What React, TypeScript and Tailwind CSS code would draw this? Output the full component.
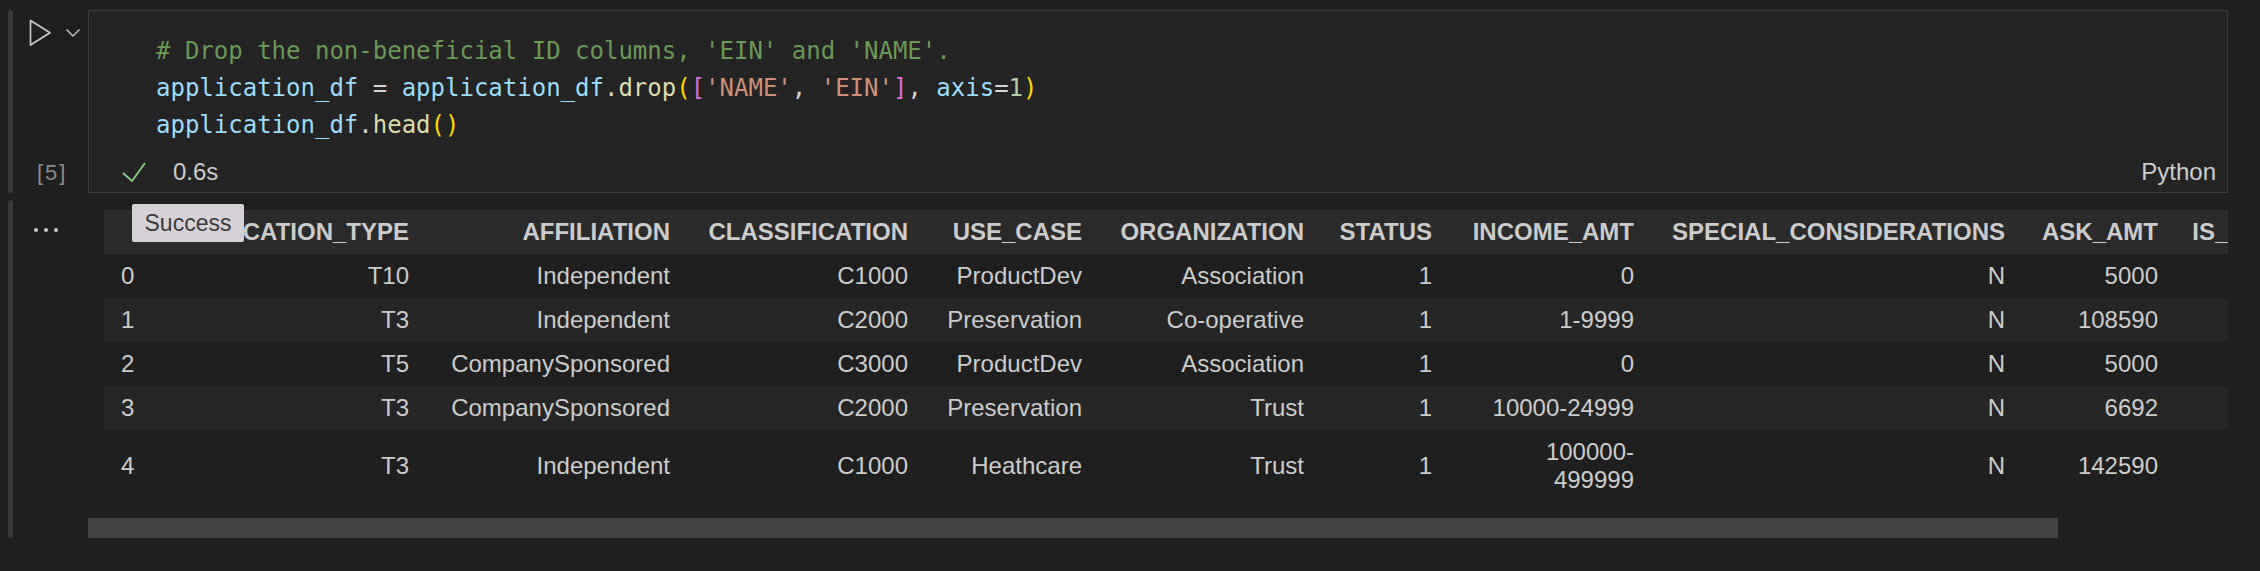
import React from "react";

const code = [
  [{ t: "# Drop the non-beneficial ID columns, 'EIN' and 'NAME'.", c: "text-[#6a9955]" }],
  [
    { t: "application_df", c: "text-[#9cdcfe]" },
    { t: " = ", c: "text-[#d4d4d4]" },
    { t: "application_df", c: "text-[#9cdcfe]" },
    { t: ".", c: "text-[#d4d4d4]" },
    { t: "drop", c: "text-[#dcdcaa]" },
    { t: "(", c: "text-[#ffd700]" },
    { t: "[", c: "text-[#da70d6]" },
    { t: "'NAME'", c: "text-[#ce9178]" },
    { t: ", ", c: "text-[#d4d4d4]" },
    { t: "'EIN'", c: "text-[#ce9178]" },
    { t: "]", c: "text-[#da70d6]" },
    { t: ", ", c: "text-[#d4d4d4]" },
    { t: "axis", c: "text-[#9cdcfe]" },
    { t: "=", c: "text-[#d4d4d4]" },
    { t: "1", c: "text-[#b5cea8]" },
    { t: ")", c: "text-[#ffd700]" },
  ],
  [
    { t: "application_df", c: "text-[#9cdcfe]" },
    { t: ".", c: "text-[#d4d4d4]" },
    { t: "head", c: "text-[#dcdcaa]" },
    { t: "()", c: "text-[#ffd700]" },
  ],
];

const columns = [
  { name: "", w: "w-[38px]" },
  { name: "APPLICATION_TYPE", w: "w-[284px]" },
  { name: "AFFILIATION", w: "w-[261px]" },
  { name: "CLASSIFICATION", w: "w-[238px]" },
  { name: "USE_CASE", w: "w-[174px]" },
  { name: "ORGANIZATION", w: "w-[222px]" },
  { name: "STATUS", w: "w-[128px]" },
  { name: "INCOME_AMT", w: "w-[202px]" },
  { name: "SPECIAL_CONSIDERATIONS", w: "w-[371px]" },
  { name: "ASK_AMT", w: "w-[153px]" },
  { name: "IS_SUCCESSFUL", w: "w-[233px]" },
];

const rows = [
  ["T10", "Independent", "C1000", "ProductDev", "Association", "1", "0", "N", "5000", "1"],
  ["T3", "Independent", "C2000", "Preservation", "Co-operative", "1", "1-9999", "N", "108590", "1"],
  ["T5", "CompanySponsored", "C3000", "ProductDev", "Association", "1", "0", "N", "5000", "1"],
  ["T3", "CompanySponsored", "C2000", "Preservation", "Trust", "1", "10000-24999", "N", "6692", "1"],
  ["T3", "Independent", "C1000", "Heathcare", "Trust", "1", "100000-\n499999", "N", "142590", "1"],
];

export default function App() {
  return (
    <div className="min-h-[571px] w-[2260px] bg-[#1f1f1f] pt-[10px] font-['Liberation_Sans',Arial,sans-serif] text-[#cccccc]">
      {/* code cell */}
      <div className="flex">
        <div className="flex w-[88px] pl-[8px]">
          <div className="w-[5px] rounded-full bg-[#3a3a3e]" />
          <div className="flex flex-1 flex-col justify-between pb-[8px] pt-[9px]">
            <div className="flex items-start">
              <svg width="23" height="28" viewBox="0 0 23 28" className="ml-[16px]">
                <path d="M1.5 1.5 L21 13.8 L1.5 26 Z" fill="none" stroke="#c8c8c8" strokeWidth="1.7" strokeLinejoin="round" />
              </svg>
              <svg width="16" height="10" viewBox="0 0 16 10" className="ml-[13px] mt-[9px]">
                <path d="M1.5 1.5 L8 8 L14.5 1.5" fill="none" stroke="#c8c8c8" strokeWidth="1.4" />
              </svg>
            </div>
            <div className="ml-[24px] text-[22px] leading-[24px] tracking-[2px] text-[#8b8b8b]">[5]</div>
          </div>
        </div>
        <div className="flex h-[183px] w-[2140px] flex-col border border-[#3c3c3c] bg-[#242424]">
          <div className="pl-[67px] pt-[22px] font-['DejaVu_Sans_Mono',monospace] text-[24px] leading-[37px] whitespace-pre">
            {code.map((line, i) => (
              <div key={i}>
                {line.map((s, j) => (
                  <span key={j} className={s.c}>{s.t}</span>
                ))}
              </div>
            ))}
          </div>
          <div className="mt-auto flex h-[40px] items-center pl-[33px] pr-[11px]">
            <svg width="24" height="20" viewBox="0 0 24 20">
              <polyline points="1,11 10,19 23,1" fill="none" stroke="#89d185" strokeWidth="1.8" />
            </svg>
            <span className="ml-[27px] text-[24px] leading-[28px]">0.6s</span>
            <span className="ml-auto text-[24px] leading-[28px]">Python</span>
          </div>
        </div>
      </div>

      {/* output */}
      <div className="relative mt-[7px] flex">
        <div className="flex w-[88px] pl-[8px]">
          <div className="w-[5px] rounded-full bg-[#3a3a3e]" />
          <div className="ml-[21px] mt-[28px] flex h-[4px] gap-[6px]">
            <div className="h-[4px] w-[4px] rounded-full bg-[#cccccc]" />
            <div className="h-[4px] w-[4px] rounded-full bg-[#cccccc]" />
            <div className="h-[4px] w-[4px] rounded-full bg-[#cccccc]" />
          </div>
        </div>
        <div className="w-[2140px] overflow-hidden pt-[10px]">
          <table className="ml-[16px] w-[2304px] table-fixed text-[24px] leading-[28px]">
            <thead>
              <tr className="bg-[#2b2b2b]">
                {columns.map((c, i) => (
                  <th key={i} className={`${c.w} py-[8px] px-[17px] text-right font-bold text-[#cccccc] whitespace-nowrap`}>
                    {c.name}
                  </th>
                ))}
              </tr>
            </thead>
            <tbody>
              {rows.map((r, i) => (
                <tr key={i} className={i % 2 === 1 ? "bg-[#262626]" : ""}>
                  <td className="py-[8px] pl-[17px] pr-0 text-left align-middle">{i}</td>
                  {r.map((v, j) => (
                    <td key={j} className="py-[8px] px-[17px] text-right align-middle whitespace-pre">
                      {v}
                    </td>
                  ))}
                </tr>
              ))}
            </tbody>
          </table>
          <div className="mt-[16px] h-[20px] w-[1970px] bg-[#434343]" />
        </div>
        <div className="absolute left-[132px] top-[4px] flex h-[38px] w-[112px] items-center justify-center rounded-[2px] bg-[#d5d1d6] text-[23px] text-[#3b3b3b]">
          Success
        </div>
      </div>
    </div>
  );
}
